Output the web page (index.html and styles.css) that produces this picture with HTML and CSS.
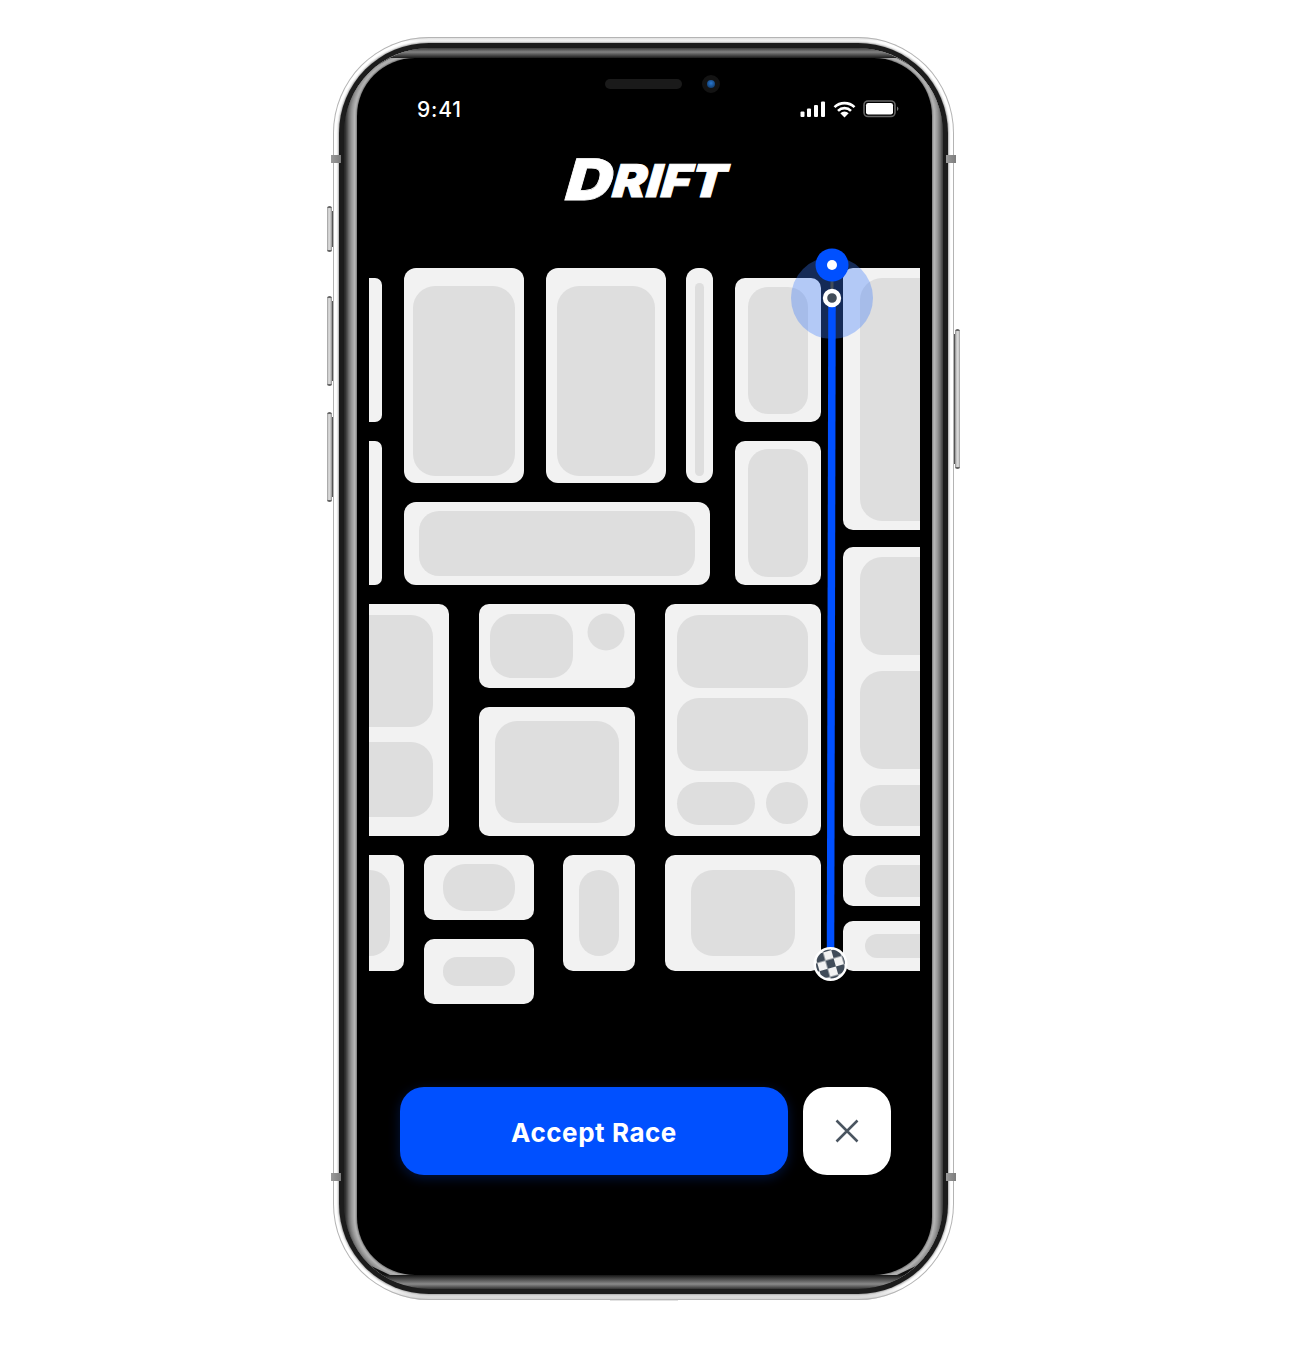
FILE: index.html
```html
<!DOCTYPE html>
<html lang="en">
<head>
<meta charset="utf-8">
<title>Drift</title>
<link rel="stylesheet" href="styles.css">
</head>
<body>
<main class="phone">
  <span class="side side-l1"></span><span class="side side-l2"></span><span class="side side-l3"></span><span class="side side-r1"></span>
  <span class="band band-tl"></span><span class="band band-tr"></span><span class="band band-bl"></span><span class="band band-br"></span>
  <div class="bezel">
    <div class="glass">
      <div class="screen">
        <div class="sensors"><span class="speaker"></span><span class="camera"></span></div>
        <div class="status">
          <span class="time">9:41</span>
          <div class="status-icons">
            <svg class="ic-signal" width="26" height="16" viewBox="0 0 26 16"><rect class="w" x="0.5" y="10.5" width="4" height="5.5" rx="1"/><rect class="w" x="7" y="7.5" width="4" height="8.5" rx="1"/><rect class="w" x="14" y="4" width="4" height="12" rx="1"/><rect class="w" x="21" y="0.5" width="4" height="15.5" rx="1"/></svg>
            <svg class="ic-wifi" width="23" height="17" viewBox="0 0 23 17"><path class="wifi" d="M1.5 6.2a14.2 14.2 0 0 1 20 0"/><path class="wifi" d="M5 9.8a9.2 9.2 0 0 1 13 0"/><path class="w" d="M11.5 16.5l-4.2-4.3a6 6 0 0 1 8.4 0z"/></svg>
            <svg class="ic-batt" width="36" height="18" viewBox="0 0 36 18"><rect class="batt-o" x="1" y="1" width="31" height="15.5" rx="4"/><rect class="w" x="3" y="3" width="27" height="11.5" rx="2.2"/><path class="batt-c" d="M34 6.5a2.5 2.5 0 0 1 0 4.5z"/></svg>
          </div>
        </div>
        <h1 class="logo"><span class="logo-d">D</span>RIFT</h1>
        <svg class="map" width="551" height="770" viewBox="369 240 551 770">
          <g class="o">
            <rect x="340" y="278" width="42" height="144" rx="7"/><rect x="340" y="441" width="42" height="144" rx="7"/>
            <rect x="404" y="268" width="120" height="215" rx="12"/><rect x="546" y="268" width="120" height="215" rx="12"/>
            <rect x="686" y="268" width="27" height="215" rx="12"/><rect x="735" y="278" width="86" height="144" rx="10"/>
            <rect x="735" y="441" width="86" height="144" rx="10"/><rect x="404" y="502" width="306" height="83" rx="12"/>
            <rect x="843" y="268" width="120" height="262" rx="10"/><rect x="843" y="547" width="120" height="289" rx="10"/>
            <rect x="330" y="604" width="119" height="232" rx="10"/><rect x="479" y="604" width="156" height="84" rx="10"/>
            <rect x="479" y="707" width="156" height="129" rx="10"/><rect x="665" y="604" width="156" height="232" rx="10"/>
            <rect x="330" y="855" width="74" height="116" rx="10"/><rect x="424" y="855" width="110" height="65" rx="10"/>
            <rect x="424" y="939" width="110" height="65" rx="10"/><rect x="563" y="855" width="72" height="116" rx="10"/>
            <rect x="665" y="855" width="156" height="116" rx="10"/><rect x="843" y="855" width="120" height="51" rx="10"/>
            <rect x="843" y="921" width="120" height="50" rx="10"/>
          </g>
          <g class="i">
            <rect x="413" y="286" width="102" height="190" rx="22"/><rect x="557" y="286" width="98" height="190" rx="22"/>
            <rect x="695" y="283" width="9" height="193" rx="4.5"/><rect x="748" y="287" width="60" height="127" rx="20"/>
            <rect x="748" y="449" width="60" height="128" rx="20"/><rect x="419" y="511" width="276" height="65" rx="20"/>
            <rect x="860" y="278" width="100" height="243" rx="22"/><rect x="860" y="557" width="100" height="98" rx="22"/>
            <rect x="860" y="671" width="100" height="98" rx="22"/><rect x="860" y="785" width="100" height="41" rx="20"/>
            <rect x="330" y="615" width="103" height="112" rx="22"/><rect x="330" y="742" width="103" height="75" rx="22"/>
            <rect x="490" y="614" width="83" height="64" rx="22"/><circle cx="606" cy="632" r="18.5"/>
            <rect x="495" y="721" width="124" height="102" rx="22"/><rect x="677" y="615" width="131" height="73" rx="22"/>
            <rect x="677" y="698" width="131" height="73" rx="22"/><rect x="677" y="782" width="78" height="43" rx="21.5"/>
            <circle cx="787" cy="803" r="21"/><rect x="330" y="870" width="60" height="86" rx="20"/>
            <rect x="443" y="864" width="72" height="47" rx="22"/><rect x="443" y="957" width="72" height="29" rx="14"/>
            <rect x="579" y="870" width="40" height="86" rx="20"/><rect x="691" y="870" width="104" height="86" rx="22"/>
            <rect x="865" y="865" width="90" height="32" rx="16"/><rect x="865" y="934" width="90" height="24" rx="12"/>
          </g>
          <defs>
            <pattern id="check" x="818" y="951" width="17" height="17" patternUnits="userSpaceOnUse" patternTransform="rotate(-16 830 964)">
              <rect class="chk-l" width="17" height="17"/>
              <rect class="chk-d" width="8.5" height="8.5"/><rect class="chk-d" x="8.5" y="8.5" width="8.5" height="8.5"/>
            </pattern>
          </defs>
          <circle class="halo" cx="832" cy="298" r="41"/>
          <path class="route" d="M832 298L830.5 964"/>
          <path class="stem" d="M832 265V298"/>
          <circle class="ring" cx="832" cy="298" r="7"/>
          <circle class="pin" cx="832" cy="265" r="16.5"/>
          <circle class="dot" cx="832" cy="265" r="5"/>
          <circle class="dot" cx="830.5" cy="964" r="17"/>
          <circle class="flag" cx="830.5" cy="964" r="14.5"/>
        </svg>
        <div class="actions">
          <button class="btn-accept">Accept Race</button>
          <button class="btn-close" aria-label="Close">
            <svg width="24" height="24" viewBox="0 0 24 24"><path class="x" d="M1.5 1.5L22.5 22.5M22.5 1.5L1.5 22.5"/></svg>
          </button>
        </div>
      </div>
    </div>
  </div>
</main>
</body>
</html>
```

FILE: styles.css
```css
html, body { margin: 0; padding: 0; background: #fff; }
body { width: 1300px; height: 1352px; overflow: hidden; font-family: Inter, "Liberation Sans", sans-serif; }

.phone {
  position: relative;
  box-sizing: border-box;
  width: 621px;
  height: 1263px;
  margin: 37px 0 0 333px;
  padding: 6px;
  border-radius: 96px;
  background: linear-gradient(#d8d8d8, #fff 5px, #fff 99%, #d0d0d0);
  box-shadow: inset 0 0 0 1px #b4b4b4;
}
.phone::after {
  content: "";
  position: absolute;
  left: 277px;
  bottom: -1px;
  width: 68px;
  height: 1px;
  background: #e2e2e2;
}
.bezel {
  box-sizing: border-box;
  height: 100%;
  padding: 5px;
  border-radius: 90px;
  background: #1c1c1c;
  box-shadow: 0 0 2px 1px #a8a8a8;
}
.glass {
  position: relative;
  box-sizing: border-box;
  height: 100%;
  padding: 10px 11px 14px 13px;
  border-radius: 85px;
  background: #2a2a2a;
  overflow: hidden;
}
.glass::before, .glass::after {
  content: "";
  position: absolute;
  inset: 0;
  z-index: 2;
  border-radius: inherit;
}
.glass::before {
  background: linear-gradient(#3c3c3c, #828282 4px, #1a1a1a 10px, #111 12px);
  clip-path: polygon(0 36px, 46px 10px, calc(100% - 46px) 10px, 100% 36px, 100% 0, 0 0);
}
.glass::after {
  background: linear-gradient(0deg, #333, #8a8a8a 5px, #151515 14px, #111 16px);
  clip-path: polygon(0 calc(100% - 36px), 46px calc(100% - 14px), calc(100% - 46px) calc(100% - 14px), 100% calc(100% - 36px), 100% 100%, 0 100%);
}
.screen {
  position: relative;
  z-index: 1;
  box-sizing: border-box;
  height: 100%;
  border-radius: 58px;
  background: #000;
  display: flex;
  flex-direction: column;
  box-shadow:
    0 0 0 1px #8a8a8a, 0 0 0 2px #a8a8a8, 0 0 0 3px #b4b4b4, 0 0 0 4px #aaa,
    0 0 0 5px #a0a0a0, 0 0 0 6px #969696, 0 0 0 7px #888, 0 0 0 8px #7a7a7a,
    0 0 0 9px #6a6a6a, 0 0 0 10px #555, 0 0 0 11px #444, 0 0 0 12px #333, 0 0 0 13px #2a2a2a;
}

.side {
  position: absolute;
  box-sizing: border-box;
  width: 5px;
  border-radius: 3px;
  border-top: 2px solid #666;
  border-bottom: 2px solid #666;
  background: linear-gradient(90deg, #999, #e2e2e2 40%, #c4c4c4 70%, #8c8c8c);
}
.side::after {
  content: "";
  position: absolute;
  top: 3px;
  bottom: 3px;
  left: 5px;
  width: 1px;
  background: #555;
}
.side-l1 { left: -6px; top: 169px; height: 46px; }
.side-l2 { left: -6px; top: 259px; height: 90px; }
.side-l3 { left: -6px; top: 375px; height: 90px; }
.side-r1 { right: -6px; top: 292px; height: 140px; background: linear-gradient(90deg, #8c8c8c, #c4c4c4 30%, #e2e2e2 60%, #999); }
.side-r1::after { left: -1px; }
.band { position: absolute; width: 10px; height: 8px; background: linear-gradient(90deg, #9a9a9a, #7c7c7c); z-index: 2; }
.band-tl { left: -2px; top: 118px; }
.band-tr { right: -2px; top: 118px; }
.band-bl { left: -2px; top: 1136px; }
.band-br { right: -2px; top: 1136px; }

.sensors {
  display: flex;
  align-items: center;
  gap: 20px;
  height: 18px;
  margin-top: 17px;
  padding-left: 248px;
}
.speaker { width: 77px; height: 10px; border-radius: 5px; background: #1a1a1a; }
.camera { width: 8px; height: 8px; border-radius: 50%; border: 5px solid #131313; background: radial-gradient(circle at 50% 40%, #2a78d0, #0a2a50); }

.status {
  display: flex;
  align-items: center;
  justify-content: space-between;
  height: 22px;
  margin-top: 5px;
  padding: 0 33px 0 60px;
  color: #fff;
}
.time { font-size: 21px; font-weight: 500; letter-spacing: 0.8px; }
.status-icons { display: flex; align-items: center; gap: 7px; }
.w { fill: #fff; }
.wifi { fill: none; stroke: #fff; stroke-width: 2.6; }
.batt-o { fill: none; stroke: #666; stroke-width: 1.6; }
.batt-c { fill: #777; }

.logo {
  margin: 35px 0 0;
  height: 53px;
  text-align: center;
  color: #fff;
  font-size: 45px;
  line-height: 50px;
  font-weight: 900;
  font-style: italic;
  font-family: Inter, sans-serif;
  transform: translateX(2px) scaleX(1.13) skewX(-5deg);
  -webkit-text-stroke: 0.8px #fff;
}
.logo-d { font-size: 57px; line-height: 50px; vertical-align: -3px; }

.map { display: block; flex: none; margin: 32px 0 0 12px; }
.o { fill: #f2f2f2; }
.i { fill: #dedede; }
.halo { fill: #3a7cff; fill-opacity: 0.34; }
.route { fill: none; stroke: #0050ff; stroke-width: 7.5; }
.stem { fill: none; stroke: #414c59; stroke-width: 3; }
.ring { fill: #414c59; stroke: #fff; stroke-width: 4.4; }
.pin { fill: #0050ff; }
.dot { fill: #fff; }
.flag { fill: url(#check); }
.chk-l { fill: #f2f2f2; }
.chk-d { fill: #414c59; }

.actions {
  display: flex;
  gap: 15px;
  margin-top: 77px;
  padding-left: 43px;
}
.btn-accept {
  width: 388px;
  height: 88px;
  padding: 2px 0 0;
  border: 0;
  border-radius: 24px;
  background: #0050ff;
  color: #fff;
  font: 700 26px Inter, sans-serif;
  letter-spacing: 0.55px;
  box-shadow: 0 3px 12px rgba(0, 80, 255, 0.25);
}
.btn-close {
  display: flex;
  align-items: center;
  justify-content: center;
  width: 88px;
  height: 88px;
  padding: 0;
  border: 0;
  border-radius: 24px;
  background: #fff;
}
.x { fill: none; stroke: #4a5560; stroke-width: 2.5; }
```
